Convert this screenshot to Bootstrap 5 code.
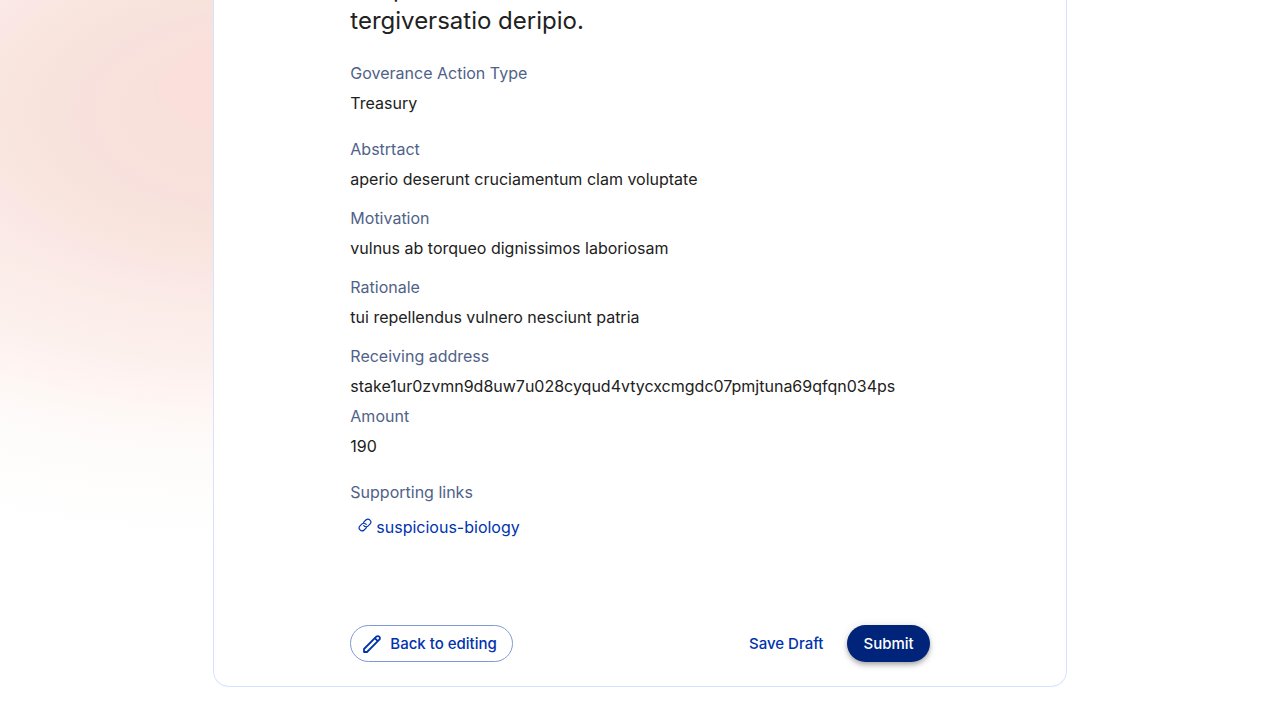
<!DOCTYPE html>
<html lang="en">
<head>
<meta charset="utf-8">
<meta name="viewport" content="width=device-width, initial-scale=1">
<title>Review your submission</title>
<link href="https://cdn.jsdelivr.net/npm/bootstrap@5.3.0/dist/css/bootstrap.min.css" rel="stylesheet">
<style>
  body {
    font-family: Inter, sans-serif;
    color: #212121;
    min-height: 100vh;
    background:
      radial-gradient(104px 54px at 256px 88px, #fbdfda 0, #fbdfda 88%, #fbdfda00 100%) no-repeat,
      radial-gradient(740px 430px at 245px 112px,
        #f7e1da 0, #f7e1da 15%, #f9e2dc 19%, #f8e1dd 22%,
        #f8e3dc 26%, #f9e6de 34%, #fae7e5 38%, #fbece8 47%, #fcf0ed 58%, #fff4f2 66%,
        #fef8f4 71%, #fefafa 77%, #fefdfc 87%, #fff 100%) no-repeat #fff;
  }
  .review-card {
    border: 1px solid #d6e2ff;
    border-top: 0;
    border-radius: 0 0 16px 16px;
    padding: 0 136px 24px;
    margin-bottom: 32px;
  }
  .review-title { font-size: 24px; line-height: 32px; margin: -27px 0 24px; }
  .field { font-size: 16px; line-height: 24px; margin-bottom: 15px; }
  .field dt { font-weight: 400; color: #506288; margin-bottom: 6px; }
  .field dd { margin: 0; }
  .field-spaced { margin-bottom: 22px; }
  .field-tight { margin-bottom: 6px; }
  .support-link { color: #0033ad; text-decoration: none; font-size: 16px; line-height: 24px; }
  .actions { margin-top: 86px; }
  .actions .btn { font-size: 15px; font-weight: 500; line-height: 24px; padding: 6px 16px; border-radius: 100px; border: 0; height: 37px; color: #0033ad; }
  .actions .btn-edit { border: 1px solid #8099d6; padding: 5px 15px 5px 11px; }
  .actions .btn-send { background: #00247a; color: #fff; box-shadow: 0 2px 4px -1px rgba(0,0,0,.2), 0 4px 5px rgba(0,0,0,.14), 0 1px 10px rgba(0,0,0,.12); }
  @media (max-width: 991px) { .review-card { padding-left: 24px; padding-right: 24px; overflow-wrap: anywhere; } }
</style>
</head>
<body>
<div class="container-fluid p-0">
  <div class="row g-0 justify-content-center">
    <main class="col-12 col-md-8">
      <div class="review-card bg-white">
        <h1 class="review-title fw-normal">temp<br>tergiversatio deripio.</h1>
        <dl class="field field-spaced"><dt>Goverance Action Type</dt><dd>Treasury</dd></dl>
        <dl class="field"><dt>Abstrtact</dt><dd>aperio deserunt cruciamentum clam voluptate</dd></dl>
        <dl class="field"><dt>Motivation</dt><dd>vulnus ab torqueo dignissimos laboriosam</dd></dl>
        <dl class="field"><dt>Rationale</dt><dd>tui repellendus vulnero nesciunt patria</dd></dl>
        <dl class="field field-tight"><dt>Receiving address</dt><dd>stake1ur0zvmn9d8uw7u028cyqud4vtycxcmgdc07pmjtuna69qfqn034ps</dd></dl>
        <dl class="field field-spaced"><dt>Amount</dt><dd>190</dd></dl>
        <dl class="field mb-0"><dt>Supporting links</dt>
          <dd class="pt-1 ps-2"><a href="#" class="support-link d-inline-flex align-items-center gap-1">
            <svg class="mb-1" width="14" height="14" viewBox="0 0 24 24" fill="none" stroke="currentColor" stroke-width="2" stroke-linecap="round" aria-hidden="true"><path d="M10 13a5 5 0 0 0 7.540.540l3-3a5 5 0 0 0-7.070-7.070l-4 4M14 11a5 5 0 0 0-7.540-.540l-3 3a5 5 0 0 0 7.070 7.070l4-4"/></svg>suspicious-biology</a></dd></dl>
        <div class="actions d-flex flex-wrap justify-content-between gap-2">
          <button type="button" class="btn btn-edit d-inline-flex align-items-center gap-2">
            <svg width="20" height="20" viewBox="0 0 20 20" fill="none" stroke="currentColor" stroke-width="1.8" stroke-linejoin="round" aria-hidden="true"><path d="M2 18v-3L14.300 2.700a2.100 2.100 0 0 1 3 3L5 18zM12.800 4.200l3 3"/></svg>Back to editing</button>
          <div class="d-flex gap-2">
            <button type="button" class="btn">Save Draft</button>
            <button type="submit" class="btn btn-send">Submit</button>
          </div>
        </div>
      </div>
    </main>
  </div>
</div>
<script src="https://cdn.jsdelivr.net/npm/bootstrap@5.3.0/dist/js/bootstrap.bundle.min.js"></script>
</body>
</html>
